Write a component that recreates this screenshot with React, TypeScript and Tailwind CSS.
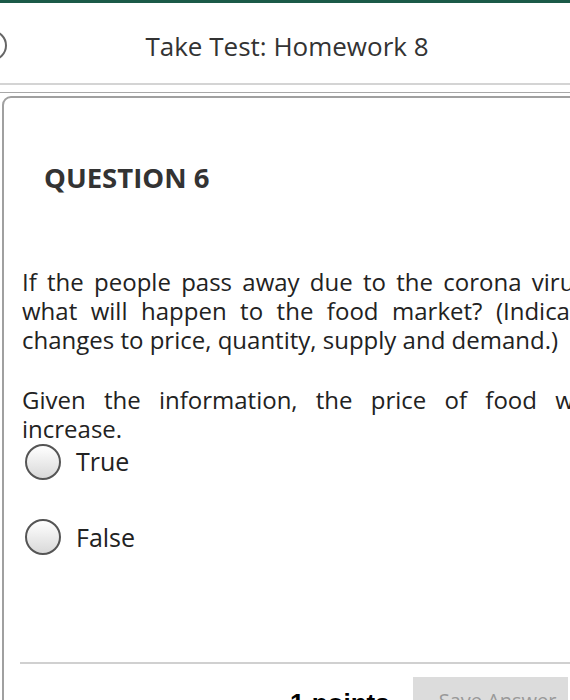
import React from "react";

const J = "[text-align-last:justify] text-justify whitespace-nowrap";

function Radio({ label }: { label: string }) {
  return (
    <div className="flex items-center">
      <div className="w-[36px] h-[36px] rounded-full border-2 border-[#555] bg-gradient-to-b from-white to-[#d9d9d9] shrink-0" />
      <span className="ml-[15px] text-[25px] text-[#222]">{label}</span>
    </div>
  );
}

export default function App() {
  return (
    <div
      className="w-[570px] h-[700px] overflow-hidden bg-white relative"
      style={{ fontFamily: '"Open Sans", "Noto Sans", sans-serif' }}
    >
      <div className="h-[3px] bg-[#1b5a48]" />
      <div className="relative h-[80px] flex items-center justify-center">
        <div className="absolute left-[-24px] top-[27px] w-[31px] h-[31px] rounded-full border-2 border-[#666]" />
        <span className="text-[26px] text-[#333] pt-[6px] pl-[4px]">Take Test: Homework 8</span>
      </div>
      <div className="h-[2px] bg-[#d4d4d4]" />
      <div className="h-[7px]" />
      <div className="h-[1px] bg-[#a8a8a8]" />
      <div className="h-[3px]" />
      <div className="ml-[2px] w-[640px] h-[700px] border-2 border-[#a0a0a0] rounded-tl-[9px]">
        <div className="pl-[40px] pt-[62px] text-[27.5px] font-bold text-[#333] leading-[36px]">QUESTION 6</div>
        <div className="ml-[18px] pt-[71px] w-[570px] text-[24px] leading-[29px] text-[#222]">
          <div className={J}>If the people pass away due to the corona virus,</div>
          <div className={J}>what will happen to the food market? (Indicate</div>
          <div>changes to price, quantity, supply and demand.)</div>
          <div className="h-[31px]" />
          <div className={J}>Given the information, the price of food will</div>
          <div>increase.</div>
        </div>
        <div className="pl-[21px] pt-[0px] flex flex-col gap-[38px]">
          <Radio label="True" />
          <Radio label="False" />
        </div>
        <div className="ml-[16px] mt-[106px] h-[2px] bg-[#d0d0d0]" />
        <div className="flex items-start mt-[13px]">
          <div className="w-[286px]" />
          <span className="text-[26px] font-bold text-black mt-[7px]" style={{ fontFamily: '"Liberation Sans", Arial, sans-serif' }}>1 points</span>
          <div className="ml-[23px] w-[155px] h-[50px] bg-[#dcdcdc] text-[#999] text-[20px] pl-[26px] pt-[9px] whitespace-nowrap overflow-hidden">Save Answer</div>
        </div>
      </div>
    </div>
  );
}
